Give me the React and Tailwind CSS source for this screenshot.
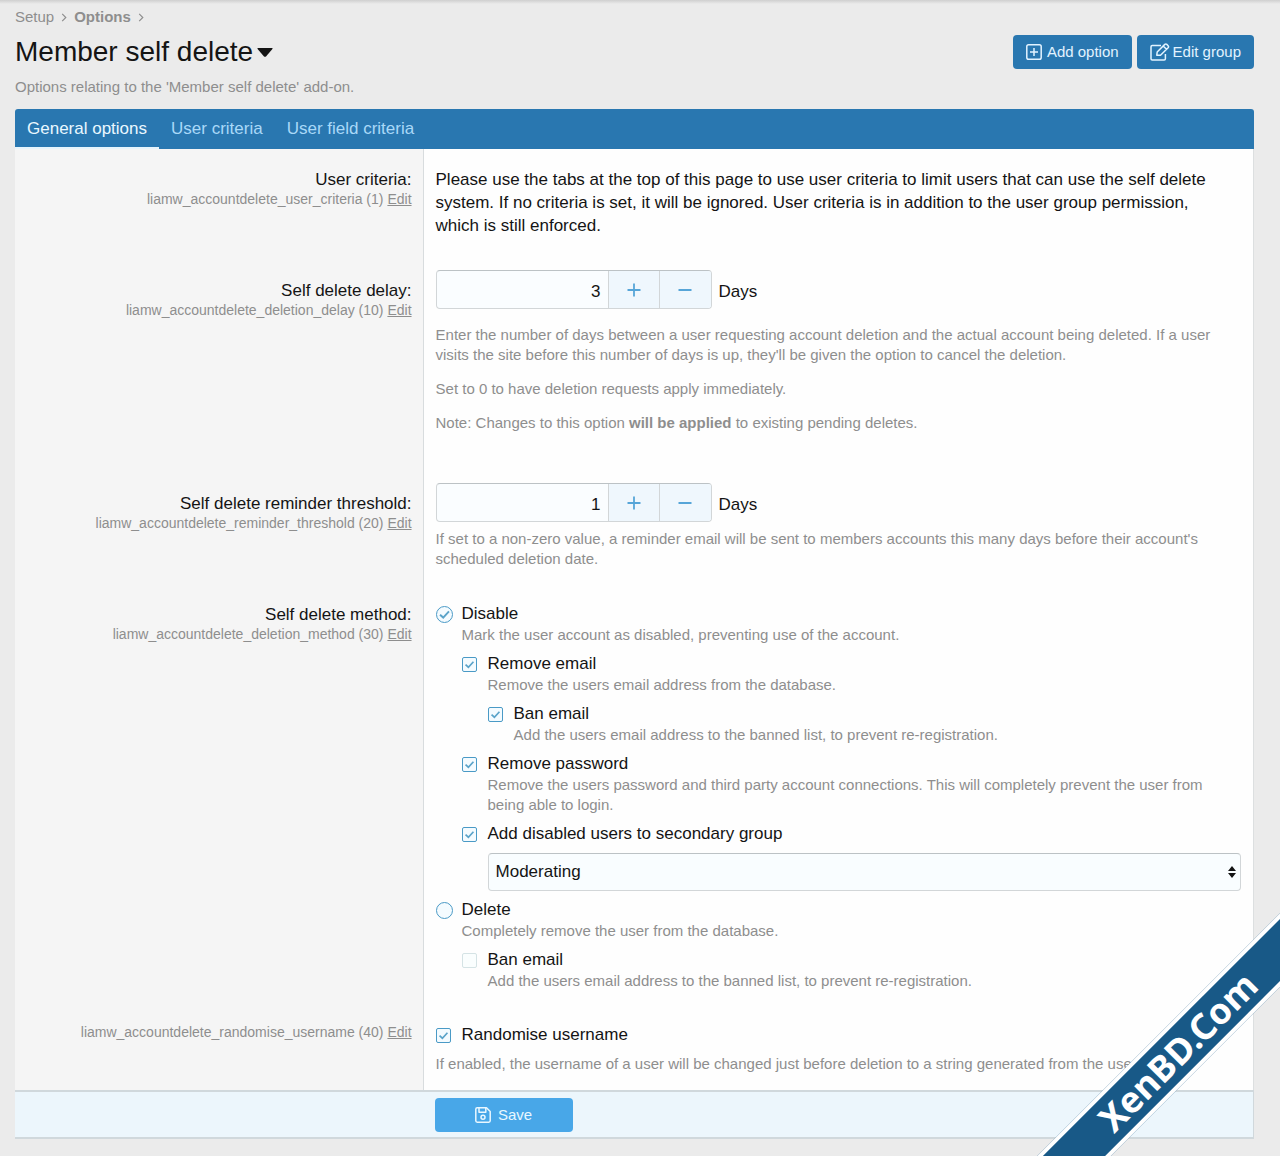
import { useState } from 'react';

const TABS = ['General options', 'User criteria', 'User field criteria'];

function Hint({ children, className = '' }) {
  return <p className={`text-[15px] leading-5 text-[#8e8e8e] ${className}`}>{children}</p>;
}

function Chevron() {
  return (
    <svg viewBox="0 0 6 10" className="h-[9px] w-[6px]" fill="none" stroke="#8e8e8e" strokeWidth="1.3">
      <path d="M1 1l4 4-4 4" />
    </svg>
  );
}

// One line of the form: label column on the left, control column on the right
function Row({ label, name, order, htmlFor, ddClass, children }) {
  return (
    <div className="flex">
      <div className="w-[33%] shrink-0 border-r border-[#d8dcde] bg-[#f5f5f5] pt-[19px] pr-[11px] pl-3 text-right">
        {label && (
          <label htmlFor={htmlFor} className="block text-[17px] leading-[23px] text-[#141414]">{label}</label>
        )}
        <p className="text-[14px] leading-4 text-[#8e8e8e]">
          {name} ({order}) <a href="#edit" className="underline">Edit</a>
        </p>
      </div>
      <div className={`min-w-0 flex-1 px-3 ${ddClass}`}>{children}</div>
    </div>
  );
}

function NumberBox({ id, initial }) {
  const [value, setValue] = useState(initial);
  return (
    <div className="flex items-center gap-[7px]">
      <div className="flex h-[39px] w-[276px] overflow-hidden rounded border border-[#d2d6d8] border-t-[#bcc2c5] bg-[#fafdff]">
        <input
          id={id}
          type="text"
          inputMode="numeric"
          value={value}
          onChange={(e) => setValue(Number(e.target.value) || 0)}
          className="min-w-0 flex-1 bg-transparent pt-1 pr-[7px] text-right text-[17px] text-[#141414] outline-none"
        />
        <button type="button" aria-label="Increase" onClick={() => setValue(value + 1)} className="flex w-[51px] items-center justify-center border-l border-[#d2d6d8] bg-[#eff7fd]">
          <svg viewBox="0 0 14 14" className="size-[14px]" stroke="#56a5d8" strokeWidth="1.8"><path d="M7 .5v13M.5 7h13" /></svg>
        </button>
        <button type="button" aria-label="Decrease" onClick={() => setValue(value - 1)} className="flex w-[52px] items-center justify-center border-l border-[#d2d6d8] bg-[#eff7fd]">
          <svg viewBox="0 0 14 14" className="size-[14px]" stroke="#56a5d8" strokeWidth="1.8"><path d="M.5 7h13" /></svg>
        </button>
      </div>
      <span className="pt-1 text-[17px] text-[#141414]">Days</span>
    </div>
  );
}

function Choice({ type = 'checkbox', name, label, hint, checked, disabled, onChange, children }) {
  const round = type === 'radio';
  const shape = round ? 'size-[17px] rounded-full' : 'size-[15px] rounded-[2px]';
  const colour = disabled ? 'border-[#d5e3e5] bg-[#fafefe]' : 'border-[#4a9ac6] bg-[#f4fbff]';
  return (
    <div>
      <label className="flex text-[17px] leading-[22px] text-[#141414]">
        <span className="grid w-[26px] shrink-0 content-center">
          <input
            type={type}
            name={name}
            checked={checked}
            disabled={disabled}
            onChange={onChange}
            className={`col-start-1 row-start-1 appearance-none border ${shape} ${colour}`}
          />
          {checked && (
            <svg viewBox="0 0 16 16" fill="none" stroke="#5aa3c9" strokeWidth="1.8" className={`pointer-events-none col-start-1 row-start-1 ${round ? 'size-[17px]' : 'size-[15px]'}`}>
              <path d="M3.800 8.200l3 2.700 5.400-5.800" />
            </svg>
          )}
        </span>
        {label}
      </label>
      {hint && <Hint className="pl-[26px]">{hint}</Hint>}
      {children && <div className="mt-2 flex flex-col gap-2 pl-[26px]">{children}</div>}
    </div>
  );
}

function Check(props) {
  const [on, setOn] = useState(!props.disabled);
  return <Choice {...props} checked={on} onChange={() => setOn(!on)} />;
}

export default function App() {
  const [tab, setTab] = useState(TABS[0]);
  const [method, setMethod] = useState('disable');

  return (
    <div className="relative min-h-screen overflow-hidden bg-[#ebebeb] bg-[linear-gradient(#cfcfcf,#ebebeb_4px)] pr-[26px] pl-[15px] font-['Liberation_Sans',Arial,sans-serif]">
      <nav className="flex h-[34px] items-center gap-[7px] text-[15px] leading-5 text-[#8e8e8e]">
        <a href="#setup">Setup</a>
        <Chevron />
        <a href="#options" className="font-bold">Options</a>
        <Chevron />
      </nav>

      <header className="flex items-start justify-between">
        <div>
          <h1 className="flex h-9 items-center gap-1 text-[28px] leading-9 text-[#141414]">
            Member self delete
            <svg viewBox="0 0 16 9" className="h-[9px] w-4" fill="#141414"><path d="M1 0h14q1 .3.4 1L9 8.4q-1 .9-2 0L.6 1Q0 .3 1 0z" /></svg>
          </h1>
          <Hint className="mt-[7px]">Options relating to the 'Member self delete' add-on.</Hint>
        </div>
        <div className="flex gap-[5px] pt-px">
          <button type="button" className="flex h-[34px] items-center gap-[5px] rounded bg-[#2977b0] px-[13px] text-[15px] text-[#e2f3ff]">
            <svg viewBox="0 0 16 16" className="size-4" fill="none" stroke="currentColor" strokeWidth="1.5">
              <rect x=".8" y=".8" width="14.4" height="14.4" rx="1.8" />
              <path d="M8 4v8M4 8h8" />
            </svg>
            Add option
          </button>
          <button type="button" className="flex h-[34px] items-center gap-[3px] rounded bg-[#2977b0] px-[13px] text-[15px] text-[#e2f3ff]">
            <svg viewBox="0 0 20 18" className="h-[18px] w-5" fill="none" stroke="currentColor" strokeWidth="1.5" strokeLinejoin="round">
              <path d="M11 2.6H2.2Q1 2.6 1 3.8v12Q1 17 2.2 17h12q1.200 0 1.200-1.200V11" />
              <path d="M6.800 12.200l.4-3.200 7.600-7.600q1-.9 2 0l1.300 1.300q.9 1 0 2l-7.600 7.600zM13.200 3l3.300 3.300" />
            </svg>
            Edit group
          </button>
        </div>
      </header>

      <form className="mt-3" onSubmit={(e) => e.preventDefault()}>
        <div className="flex h-10 rounded-t-[3px] bg-[#2977b0]" role="tablist">
          {TABS.map((t) => (
            <button
              key={t}
              type="button"
              role="tab"
              aria-selected={t === tab}
              onClick={() => setTab(t)}
              className={`border-b-2 px-3 pt-px text-[17px] ${t === tab ? 'border-[#e6f4fc] text-[#e9f7ff]' : 'border-transparent text-[#a9d9f8]'}`}
            >
              {t}
            </button>
          ))}
        </div>

        <div className="border-r border-[#dcdfe0] bg-[#fefefe]">
          <Row label="User criteria:" name="liamw_accountdelete_user_criteria" order="1" ddClass="pt-[19px] pb-[23px]">
            <p className="pr-2 text-[17px] leading-[23px] text-[#141414]">
              Please use the tabs at the top of this page to use user criteria to limit users that can use the self
              delete system. If no criteria is set, it will be ignored. User criteria is in addition to the user group
              permission, which is still enforced.
            </p>
          </Row>

          <Row label="Self delete delay:" htmlFor="delay" name="liamw_accountdelete_deletion_delay" order="10" ddClass="pt-[10px] pb-10">
            <NumberBox id="delay" initial={3} />
            <div className="mt-4 flex flex-col gap-[14px]">
              <Hint>
                Enter the number of days between a user requesting account deletion and the actual account being
                deleted. If a user visits the site before this number of days is up, they'll be given the option to
                cancel the deletion.
              </Hint>
              <Hint>Set to 0 to have deletion requests apply immediately.</Hint>
              <Hint>Note: Changes to this option <b>will be applied</b> to existing pending deletes.</Hint>
            </div>
          </Row>

          <Row label="Self delete reminder threshold:" htmlFor="threshold" name="liamw_accountdelete_reminder_threshold" order="20" ddClass="pt-[10px] pb-[15px]">
            <NumberBox id="threshold" initial={1} />
            <Hint className="mt-[7px]">
              If set to a non-zero value, a reminder email will be sent to members accounts this many days before their
              account's scheduled deletion date.
            </Hint>
          </Row>

          <Row label="Self delete method:" name="liamw_accountdelete_deletion_method" order="30" ddClass="pt-[19px] pb-[14px]">
            <div className="flex flex-col gap-2">
              <Choice
                type="radio"
                name="method"
                label="Disable"
                hint="Mark the user account as disabled, preventing use of the account."
                checked={method === 'disable'}
                onChange={() => setMethod('disable')}
              >
                <Check label="Remove email" hint="Remove the users email address from the database.">
                  <Check label="Ban email" hint="Add the users email address to the banned list, to prevent re-registration." />
                </Check>
                <Check
                  label="Remove password"
                  hint="Remove the users password and third party account connections. This will completely prevent the user from being able to login."
                />
                <Check label="Add disabled users to secondary group">
                  <div className="grid items-center">
                    <select aria-label="Secondary group" className="col-start-1 row-start-1 h-[38px] w-full appearance-none rounded border border-[#d2d6d8] border-t-[#bcc2c5] bg-[#f9fdff] px-[7px] text-[17px] text-[#141414]">
                      <option>Moderating</option>
                    </select>
                    <svg viewBox="0 0 8 12" className="pointer-events-none col-start-1 row-start-1 mr-[5px] h-3 w-2 justify-self-end" fill="#141414">
                      <path d="M4 0l4 5H0zM4 12L0 7h8z" />
                    </svg>
                  </div>
                </Check>
              </Choice>
              <Choice
                type="radio"
                name="method"
                label="Delete"
                hint="Completely remove the user from the database."
                checked={method === 'delete'}
                onChange={() => setMethod('delete')}
              >
                <Check label="Ban email" hint="Add the users email address to the banned list, to prevent re-registration." disabled />
              </Choice>
            </div>
          </Row>

          <Row name="liamw_accountdelete_randomise_username" order="40" ddClass="pt-[19px] pb-4">
            <Check label="Randomise username" />
            <Hint className="mt-2 truncate">
              If enabled, the username of a user will be changed just before deletion to a string generated from the user
            </Hint>
          </Row>
        </div>

        <div className="flex border-t-2 border-r border-b-2 border-[#d0d8dc] bg-[#ecf6fc] pt-[6px] pb-[5px]">
          <div className="w-[33%] shrink-0" />
          <button type="submit" className="ml-[11px] flex h-[34px] w-[138px] items-center justify-center gap-[7px] rounded bg-[#48a7e8] text-[15px] text-[#e9f7ff]">
            <svg viewBox="0 0 16 16" className="size-4" fill="none" stroke="currentColor" strokeWidth="1.5" strokeLinejoin="round">
              <path d="M2.200.8h9.300l3.700 3.700v9.300q0 1.400-1.400 1.400H2.200Q.8 15.200.8 13.800V2.200Q.8.8 2.200.8z" />
              <path d="M4 1v4.200h6.800V1" />
              <circle cx="8" cy="10.200" r="2" />
            </svg>
            Save
          </button>
        </div>
      </form>

      {/* Corner ribbon */}
      <div className="pointer-events-none absolute -right-[148px] bottom-[78px] flex h-[52px] w-[500px] -rotate-45 items-center justify-center border-y-4 border-white bg-[#185987] font-['Noto_Sans','Open_Sans',sans-serif] text-[36px] leading-none font-bold text-white">
        XenBD.Com
      </div>
    </div>
  );
}
